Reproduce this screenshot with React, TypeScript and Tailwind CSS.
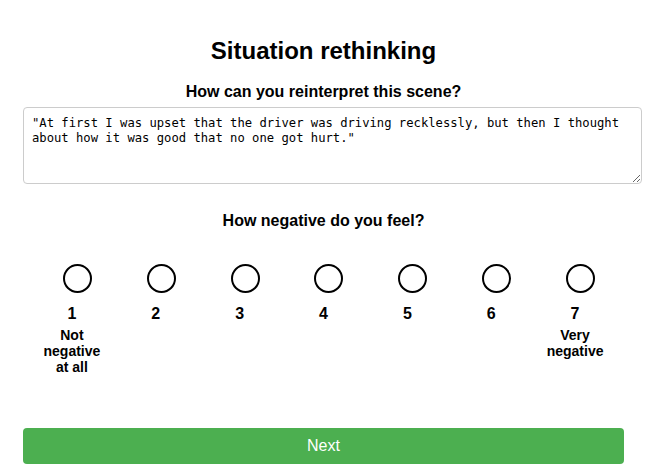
import React from "react";

const options = [
  { n: "1", label: "Not negative at all" },
  { n: "2", label: "" },
  { n: "3", label: "" },
  { n: "4", label: "" },
  { n: "5", label: "" },
  { n: "6", label: "" },
  { n: "7", label: "Very negative" },
];

export default function App() {
  return (
    <div className="w-[654px] h-[474px] bg-white overflow-hidden text-black font-['Liberation_Sans',Arial,sans-serif]">
      <div className="ml-[23px] w-[601px] pt-[37px] flex flex-col">
        <h1 className="text-[24px] leading-[28px] font-bold text-center">Situation rethinking</h1>
        <h2 className="mt-[18px] text-[16px] leading-[18px] font-bold text-center">
          How can you reinterpret this scene?
        </h2>
        <textarea
          className="mt-[6px] block w-[619px] h-[77px] box-border p-[8px] border border-[#ccc] rounded-[4px] font-['DejaVu_Sans_Mono',monospace] text-[12.2px] leading-[15px] text-black resize"
          defaultValue={'"At first I was upset that the driver was driving recklessly, but then I thought about how it was good that no one got hurt."'}
        />
        <h2 className="mt-[28px] text-[16px] leading-[18px] font-bold text-center">How negative do you feel?</h2>
        <div className="mt-[34px] self-center w-[587px] grid grid-cols-7">
          {options.map((o) => (
            <div key={o.n} className="flex flex-col items-center">
              <div className="ml-[11px] w-[29px] h-[29px] rounded-full border-2 border-black bg-white" />
              <div className="mt-[12px] text-[16px] leading-[18px] font-bold">{o.n}</div>
              {o.label && (
                <div className="mt-[4px] w-[64px] text-[14px] leading-[16px] font-bold text-center">{o.label}</div>
              )}
            </div>
          ))}
        </div>
        <button className="mt-[53px] h-[36px] w-full bg-[#4CAF50] text-white text-[16px] rounded-[4px] font-['Liberation_Sans',Arial,sans-serif]">
          Next
        </button>
      </div>
    </div>
  );
}
